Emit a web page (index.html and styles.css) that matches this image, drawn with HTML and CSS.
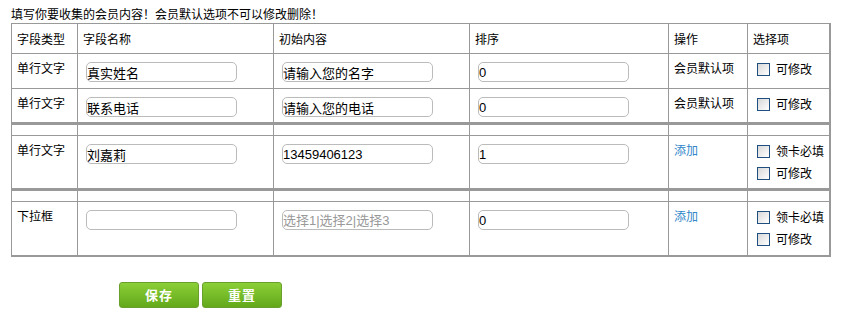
FILE: index.html
```html
<!DOCTYPE html>
<html lang="zh-CN">
<head>
  <meta charset="UTF-8">
  <title>会员字段设置</title>
  <link rel="stylesheet" href="styles.css">
</head>
<body>
  <div class="page">
    <p class="tip">填写你要收集的会员内容！会员默认选项不可以修改删除！</p>

    <table class="field-table">
      <colgroup>
        <col class="c-type"><col class="c-name"><col class="c-init"><col class="c-sort"><col class="c-op"><col class="c-opt">
      </colgroup>
      <thead>
        <tr class="head">
          <th>字段类型</th><th>字段名称</th><th>初始内容</th><th>排序</th><th>操作</th><th>选择项</th>
        </tr>
      </thead>
      <tbody>
        <tr class="row">
          <td>单行文字</td>
          <td><input class="txt" type="text" value="真实姓名"></td>
          <td><input class="txt" type="text" value="请输入您的名字"></td>
          <td><input class="txt" type="text" value="0"></td>
          <td>会员默认项</td>
          <td><label class="check"><input type="checkbox"> 可修改</label></td>
        </tr>
        <tr class="row">
          <td>单行文字</td>
          <td><input class="txt" type="text" value="联系电话"></td>
          <td><input class="txt" type="text" value="请输入您的电话"></td>
          <td><input class="txt" type="text" value="0"></td>
          <td>会员默认项</td>
          <td><label class="check"><input type="checkbox"> 可修改</label></td>
        </tr>
        <tr class="sep"><td></td><td></td><td></td><td></td><td></td><td></td></tr>
        <tr class="row tall">
          <td>单行文字</td>
          <td><input class="txt" type="text" value="刘嘉莉"></td>
          <td><input class="txt" type="text" value="13459406123"></td>
          <td><input class="txt" type="text" value="1"></td>
          <td><a href="#" class="add">添加</a></td>
          <td>
            <label class="check"><input type="checkbox"> 领卡必填</label>
            <label class="check"><input type="checkbox"> 可修改</label>
          </td>
        </tr>
        <tr class="sep"><td></td><td></td><td></td><td></td><td></td><td></td></tr>
        <tr class="row tall">
          <td>下拉框</td>
          <td><input class="txt" type="text" value=""></td>
          <td><input class="txt" type="text" placeholder="选择1|选择2|选择3"></td>
          <td><input class="txt" type="text" value="0"></td>
          <td><a href="#" class="add">添加</a></td>
          <td>
            <label class="check"><input type="checkbox"> 领卡必填</label>
            <label class="check"><input type="checkbox"> 可修改</label>
          </td>
        </tr>
      </tbody>
    </table>

    <div class="actions">
      <button class="btn">保存</button>
      <button class="btn">重置</button>
    </div>
  </div>
</body>
</html>
```

FILE: styles.css
```css
body {
  margin: 0;
  font-family: "Noto Sans CJK SC", "Liberation Sans", sans-serif;
  font-size: 12px;
  color: #000;
  background: #fff;
}

.page {
  padding: 7px 11px;
}

.tip {
  margin: 0 0 2px;
  line-height: 14px;
}

.field-table {
  width: 819px;
  table-layout: fixed;
  border-collapse: collapse;
  border-right: 2px solid #999;
  border-bottom: 2px solid #999;
}

.c-type { width: 66px; }
.c-name { width: 196px; }
.c-init { width: 196px; }
.c-sort { width: 199px; }
.c-op { width: 79px; }
.c-opt { width: 82px; }

.field-table th,
.field-table td {
  border: 1px solid #999;
  padding: 0 0 0 5px;
  text-align: left;
  vertical-align: top;
  font-weight: normal;
  line-height: 14px;
}

.head th {
  height: 29px;
  vertical-align: middle;
}

.row td {
  height: 35px;
  padding-top: 7px;
  box-sizing: border-box;
}

.row.tall td {
  height: 54px;
}

.sep td {
  height: 12px;
  padding: 0;
  border-top: 3px solid #999;
  box-sizing: border-box;
}

.txt {
  display: block;
  width: 151px;
  height: 20px;
  margin: 1px 0 0 3px;
  padding: 0;
  box-sizing: border-box;
  border: 1px solid #bbb;
  border-radius: 5px;
  font-family: "Liberation Sans", "Noto Sans CJK SC", sans-serif;
  font-size: 13px;
  color: #000;
  outline: none;
}

.txt::placeholder {
  color: #999;
}

.add {
  color: #2f86c9;
  text-decoration: none;
}

.check {
  display: flex;
  align-items: center;
  gap: 6px;
  height: 22px;
  margin: -3px 0 0 4px;
}

.check + .check {
  margin-top: 0;
}

.check input {
  appearance: none;
  width: 13px;
  height: 13px;
  margin: 0;
  border: 1px solid #1f4f7e;
  background: linear-gradient(135deg, #d8d8d8, #fff);
}

.actions {
  display: flex;
  gap: 3px;
  margin: 25px 0 0 108px;
}

.btn {
  width: 80px;
  height: 26px;
  border: 1px solid #6a9f2c;
  border-radius: 3px;
  background: linear-gradient(#8bd038, #63a81a);
  color: #fff;
  font-family: "Noto Sans CJK SC", sans-serif;
  font-size: 13px;
  font-weight: bold;
  letter-spacing: 1px;
  cursor: pointer;
}
```
